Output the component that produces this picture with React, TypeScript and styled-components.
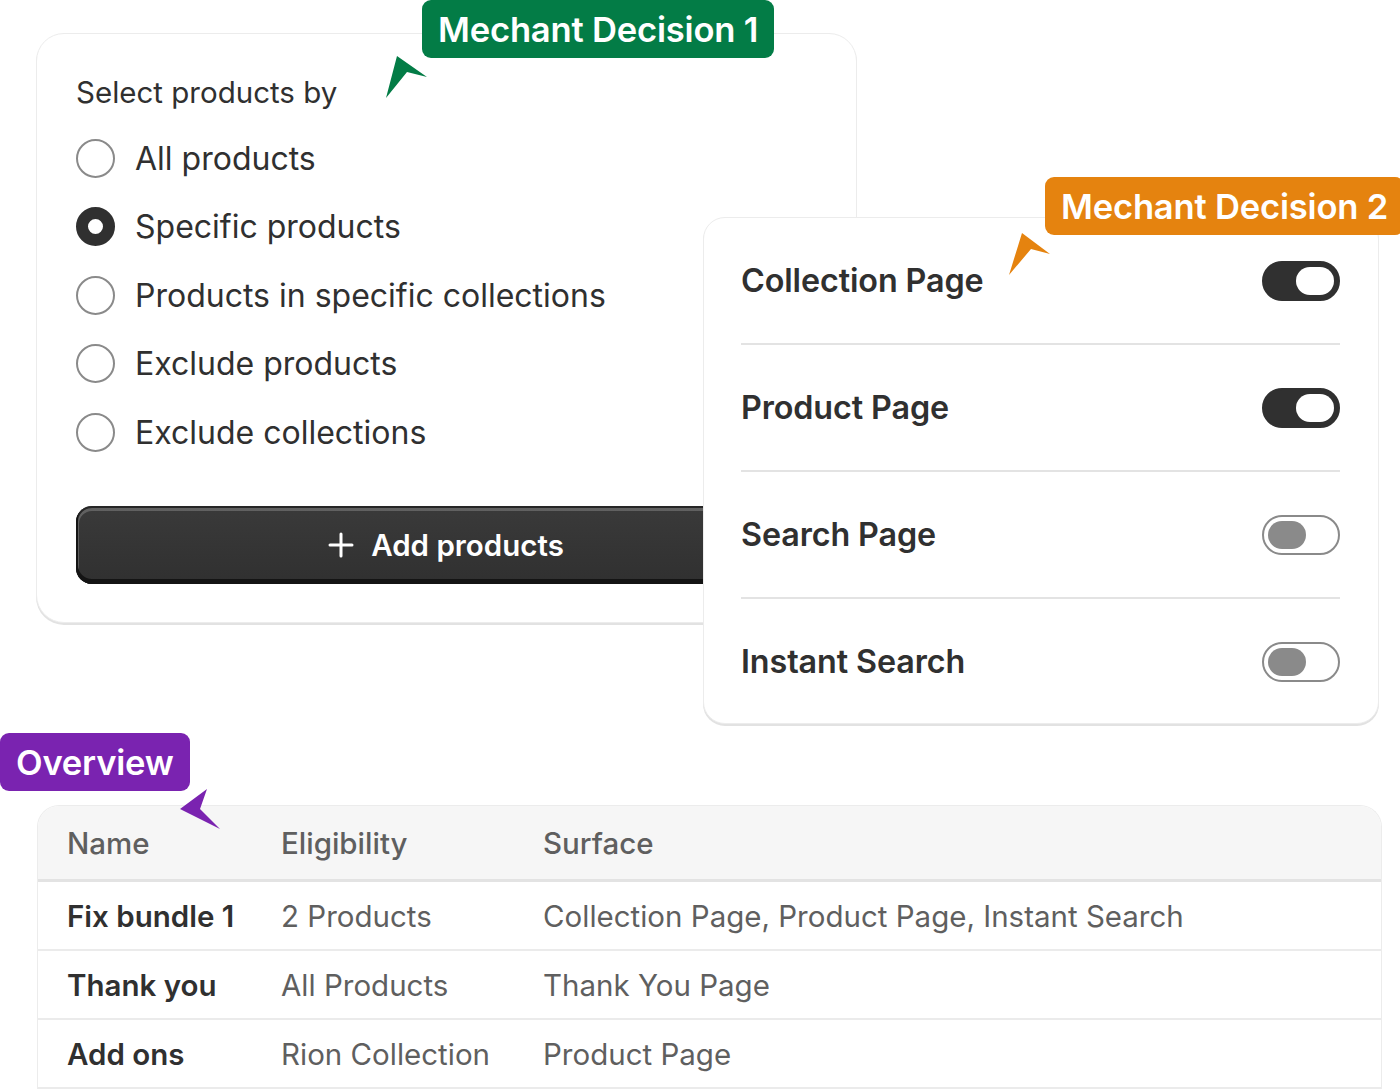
import React from 'react'
import styled, { createGlobalStyle } from 'styled-components'

const GlobalStyle = createGlobalStyle`
  html, body {
    margin: 0;
    padding: 0;
    background: #ffffff;
  }
  body {
    font-family: Inter, "Noto Sans", "Liberation Sans", sans-serif;
    color: #303030;
    -webkit-font-smoothing: antialiased;
  }
`

const Canvas = styled.div`
  width: 1400px;
  height: 1089px;
  overflow: hidden;
  position: relative;
`

const TopSection = styled.div`
  display: flex;
  align-items: flex-start;
  padding-left: 36px;
`

const Card = styled.div`
  position: relative;
  box-sizing: border-box;
  background: #ffffff;
  border: 1px solid #ececec;
  box-shadow: 0 2px 0 0 #e2e2e2;
`

const SelectCard = styled(Card)`
  width: 821px;
  height: 590px;
  margin-top: 33px;
  border-radius: 28px;
  padding: 39px 40px 0 39px;
`

const SurfaceCard = styled(Card)`
  width: 676px;
  height: 507px;
  margin-top: 217px;
  margin-left: -154px;
  border-radius: 22px;
  padding: 0 38px 0 37px;
  z-index: 2;
`

const Badge = styled.div<{ $bg: string }>`
  display: inline-flex;
  align-items: center;
  box-sizing: border-box;
  height: 58px;
  padding: 0 16px;
  border-radius: 9px;
  background: ${p => p.$bg};
  color: #ffffff;
  font-size: 34.6px;
  font-weight: 600;
  letter-spacing: -0.2px;
  white-space: nowrap;
`

const FloatingBadge = styled(Badge)<{ $top: number; $left: number }>`
  position: absolute;
  top: ${p => p.$top}px;
  left: ${p => p.$left}px;
  z-index: 3;
`

const Pointer = styled.svg<{ $top: number; $left: number }>`
  position: absolute;
  top: ${p => p.$top}px;
  left: ${p => p.$left}px;
  z-index: 3;
  overflow: visible;
`

const SectionLabel = styled.div`
  font-size: 29.5px;
  line-height: 38px;
  font-weight: 400;
  color: #303030;
`

const RadioList = styled.div`
  display: flex;
  flex-direction: column;
  margin-top: 13px;
`

const RadioRow = styled.label`
  display: flex;
  align-items: center;
  gap: 20px;
  height: 68.5px;
  font-size: 32px;
  color: #303030;
`

const RadioCircle = styled.span<{ $checked?: boolean }>`
  box-sizing: border-box;
  width: 39px;
  height: 39px;
  border-radius: 50%;
  flex-shrink: 0;
  border: ${p => (p.$checked ? '12px solid #303030' : '2px solid #8a8a8a')};
  background: #ffffff;
`

const AddButton = styled.button`
  margin-top: 39px;
  width: 740px;
  height: 78px;
  display: flex;
  align-items: center;
  justify-content: center;
  gap: 17px;
  border: none;
  border-radius: 16px;
  background: linear-gradient(180deg, #3a3a3a 0%, #303030 100%);
  box-shadow:
    inset 0 -3px 0 2px #141414,
    inset 0 0 0 2px #262626,
    inset 0 2px 0 3px rgba(255, 255, 255, 0.2);
  color: #ffffff;
  font-family: inherit;
  font-size: 29.5px;
  font-weight: 600;
  cursor: pointer;
`

const SurfaceRow = styled.div<{ $last?: boolean }>`
  box-sizing: border-box;
  height: ${p => (p.$last ? 125 : 127)}px;
  display: flex;
  align-items: center;
  justify-content: space-between;
  border-bottom: ${p => (p.$last ? 'none' : '2px solid #e3e3e3')};
`

const SurfaceName = styled.span`
  font-size: 32.3px;
  font-weight: 600;
  color: #303030;
  letter-spacing: -0.1px;
`

const Toggle = styled.span<{ $on: boolean }>`
  box-sizing: border-box;
  width: 78px;
  height: 40px;
  border-radius: 20px;
  padding: 4px;
  display: flex;
  justify-content: ${p => (p.$on ? 'flex-end' : 'flex-start')};
  align-items: center;
  background: ${p => (p.$on ? '#303030' : '#ffffff')};
  border: 2px solid ${p => (p.$on ? '#303030' : '#8a8a8a')};
`

const Knob = styled.span<{ $on: boolean }>`
  width: 38px;
  height: 28px;
  border-radius: 14px;
  background: ${p => (p.$on ? '#ffffff' : '#8a8a8a')};
`

const OverviewSection = styled.div`
  position: relative;
  margin-top: 9px;
`

const TableCard = styled.div`
  margin: 14px 0 0 37px;
  width: 1343px;
  border: 1px solid #ececec;
  border-bottom: none;
  border-radius: 22px 22px 0 0;
  overflow: hidden;
  background: #ffffff;
`

const TableRow = styled.div<{ $head?: boolean }>`
  box-sizing: border-box;
  display: grid;
  grid-template-columns: 214px 262px 1fr;
  align-items: center;
  padding-left: 29px;
  height: ${p => (p.$head ? 76 : 69)}px;
  background: ${p => (p.$head ? '#f6f6f6' : '#ffffff')};
  border-bottom: ${p => (p.$head ? '3px solid #e3e3e3' : '2px solid #ebebeb')};
  font-size: 29.5px;
`

const Cell = styled.span<{ $kind: 'head' | 'name' | 'plain' }>`
  white-space: nowrap;
  font-weight: ${p => (p.$kind === 'name' ? 600 : p.$kind === 'head' ? 500 : 400)};
  color: ${p => (p.$kind === 'name' ? '#303030' : '#5f5f5f')};
`

const selectOptions = [
  { label: 'All products', checked: false },
  { label: 'Specific products', checked: true },
  { label: 'Products in specific collections', checked: false },
  { label: 'Exclude products', checked: false },
  { label: 'Exclude collections', checked: false },
]

const surfaces = [
  { name: 'Collection Page', on: true },
  { name: 'Product Page', on: true },
  { name: 'Search Page', on: false },
  { name: 'Instant Search', on: false },
]

const bundles = [
  { name: 'Fix bundle 1', eligibility: '2 Products', surface: 'Collection Page, Product Page, Instant Search' },
  { name: 'Thank you', eligibility: 'All Products', surface: 'Thank You Page' },
  { name: 'Add ons', eligibility: 'Rion Collection', surface: 'Product Page' },
]

// Arrowhead with a notched tail, tip at the first point
function CalloutPointer({ color, points, top, left }: { color: string; points: string; top: number; left: number }) {
  return (
    <Pointer $top={top} $left={left} width="44" height="44" viewBox="0 0 44 44">
      <polygon points={points} fill={color} />
    </Pointer>
  )
}

function PlusIcon() {
  return (
    <svg width="26" height="26" viewBox="0 0 26 26">
      <path d="M13 2v22M2 13h22" stroke="#ffffff" strokeWidth="3" strokeLinecap="round" />
    </svg>
  )
}

export default function App() {
  return (
    <Canvas>
      <GlobalStyle />
      <TopSection>
        <SelectCard>
          <FloatingBadge $bg="#037c46" $top={-34} $left={385}>Mechant Decision 1</FloatingBadge>
          <CalloutPointer color="#037c46" top={21} left={347} points="2,43 13,1 43,22 23,17" />
          <SectionLabel>Select products by</SectionLabel>
          <RadioList>
            {selectOptions.map(opt => (
              <RadioRow key={opt.label}>
                <RadioCircle $checked={opt.checked} />
                {opt.label}
              </RadioRow>
            ))}
          </RadioList>
          <AddButton>
            <PlusIcon />
            Add products
          </AddButton>
        </SelectCard>

        <SurfaceCard>
          <FloatingBadge $bg="#e5830f" $top={-41} $left={341}>Mechant Decision 2</FloatingBadge>
          <CalloutPointer color="#e5830f" top={14} left={303} points="2,43 15,1 43,22 24,17" />
          {surfaces.map((s, i) => (
            <SurfaceRow key={s.name} $last={i === surfaces.length - 1}>
              <SurfaceName>{s.name}</SurfaceName>
              <Toggle $on={s.on}>
                <Knob $on={s.on} />
              </Toggle>
            </SurfaceRow>
          ))}
        </SurfaceCard>
      </TopSection>

      <OverviewSection>
        <Badge $bg="#7a23b0">Overview</Badge>
        <CalloutPointer color="#7a23b0" top={55} left={179} points="41,41 1,21 28,1 21,21" />
        <TableCard>
          <TableRow $head>
            <Cell $kind="head">Name</Cell>
            <Cell $kind="head">Eligibility</Cell>
            <Cell $kind="head">Surface</Cell>
          </TableRow>
          {bundles.map(b => (
            <TableRow key={b.name}>
              <Cell $kind="name">{b.name}</Cell>
              <Cell $kind="plain">{b.eligibility}</Cell>
              <Cell $kind="plain">{b.surface}</Cell>
            </TableRow>
          ))}
        </TableCard>
      </OverviewSection>
    </Canvas>
  )
}
